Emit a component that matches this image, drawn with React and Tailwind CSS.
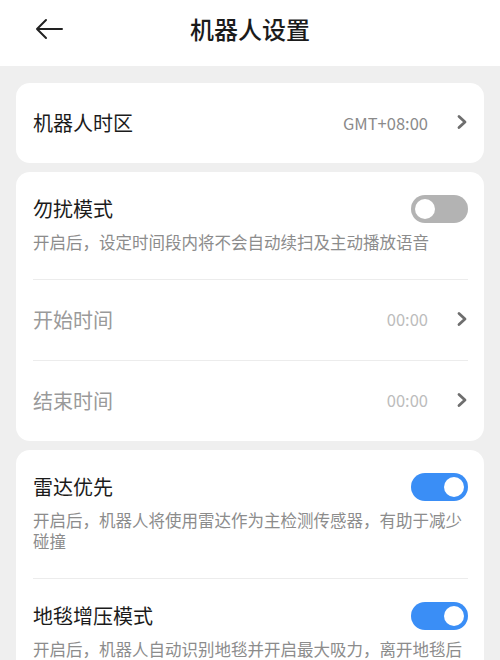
import React from "react";

const font = { fontFamily: '"Noto Sans CJK SC", "Noto Sans", sans-serif' };

function Chevron({ color = "#6e6e6e" }) {
  return (
    <svg width="12" height="16" viewBox="0 0 12 16" className="shrink-0 relative -top-[1px]">
      <polyline points="3,2.5 9,8 3,13.5" fill="none" stroke={color} strokeWidth="2.8" strokeLinecap="round" strokeLinejoin="round" />
    </svg>
  );
}

function Toggle({ on }) {
  return (
    <div className={on ? "w-[57px] h-[28px] rounded-full bg-[#3a8ef6] flex items-center justify-end px-[4px] shrink-0" : "w-[57px] h-[28px] rounded-full bg-[#b3b3b3] flex items-center justify-start px-[4px] shrink-0"}>
      <div className="w-[20px] h-[20px] rounded-full bg-white" />
    </div>
  );
}

function ToggleBlock({ title, desc, on }) {
  return (
    <div className="pt-[23px] pb-[25px]">
      <div className="flex items-center justify-between h-[28px]">
        <span className="text-[20px] text-[#1b1b1b] leading-[28px]">{title}</span>
        <Toggle on={on} />
      </div>
      <div className="mt-[9px] text-[16.5px] leading-[21.5px] text-[#8c8c8c]">{desc}</div>
    </div>
  );
}

function ValueRow({ title, value, dim }) {
  return (
    <div className="h-[80px] flex items-center justify-between">
      <span className={dim ? "text-[20px] text-[#9a9a9a]" : "text-[20px] text-[#1b1b1b]"}>{title}</span>
      <div className="flex items-center gap-[28px]">
        <span className={dim ? "text-[16.5px] text-[#bcbcbc]" : "text-[16.5px] text-[#8a8a8a]"}>{value}</span>
        <Chevron />
      </div>
    </div>
  );
}

export default function App() {
  return (
    <div style={font} className="w-[500px] h-[660px] overflow-hidden bg-[#efefef]">
      <div className="h-[66px] bg-white relative flex items-center justify-center pb-[8px]">
        <svg width="28" height="22" viewBox="0 0 28 22" className="absolute left-[35px] top-[18px]">
          <path d="M27 11 H2 M11 2 L2 11 L11 20" fill="none" stroke="#222" strokeWidth="2" strokeLinecap="round" strokeLinejoin="round" />
        </svg>
        <span className="text-[24px] font-medium text-[#1b1b1b] leading-none">机器人设置</span>
      </div>
      <div className="px-[16px] pt-[17px] flex flex-col gap-[9px]">
        <div className="bg-white rounded-[14px] px-[17px] pr-[16px]">
          <ValueRow title="机器人时区" value="GMT+08:00" />
        </div>
        <div className="bg-white rounded-[14px] px-[17px] pr-[16px]">
          <ToggleBlock title="勿扰模式" desc="开启后，设定时间段内将不会自动续扫及主动播放语音" on={false} />
          <div className="h-px bg-[#ececec]" />
          <ValueRow title="开始时间" value="00:00" dim />
          <div className="h-px bg-[#ececec]" />
          <ValueRow title="结束时间" value="00:00" dim />
        </div>
        <div className="bg-white rounded-[14px] px-[17px] pr-[16px]">
          <ToggleBlock title="雷达优先" desc="开启后，机器人将使用雷达作为主检测传感器，有助于减少碰撞" on />
          <div className="h-px bg-[#ececec]" />
          <ToggleBlock title="地毯增压模式" desc="开启后，机器人自动识别地毯并开启最大吸力，离开地毯后恢复原吸力" on />
        </div>
      </div>
    </div>
  );
}
